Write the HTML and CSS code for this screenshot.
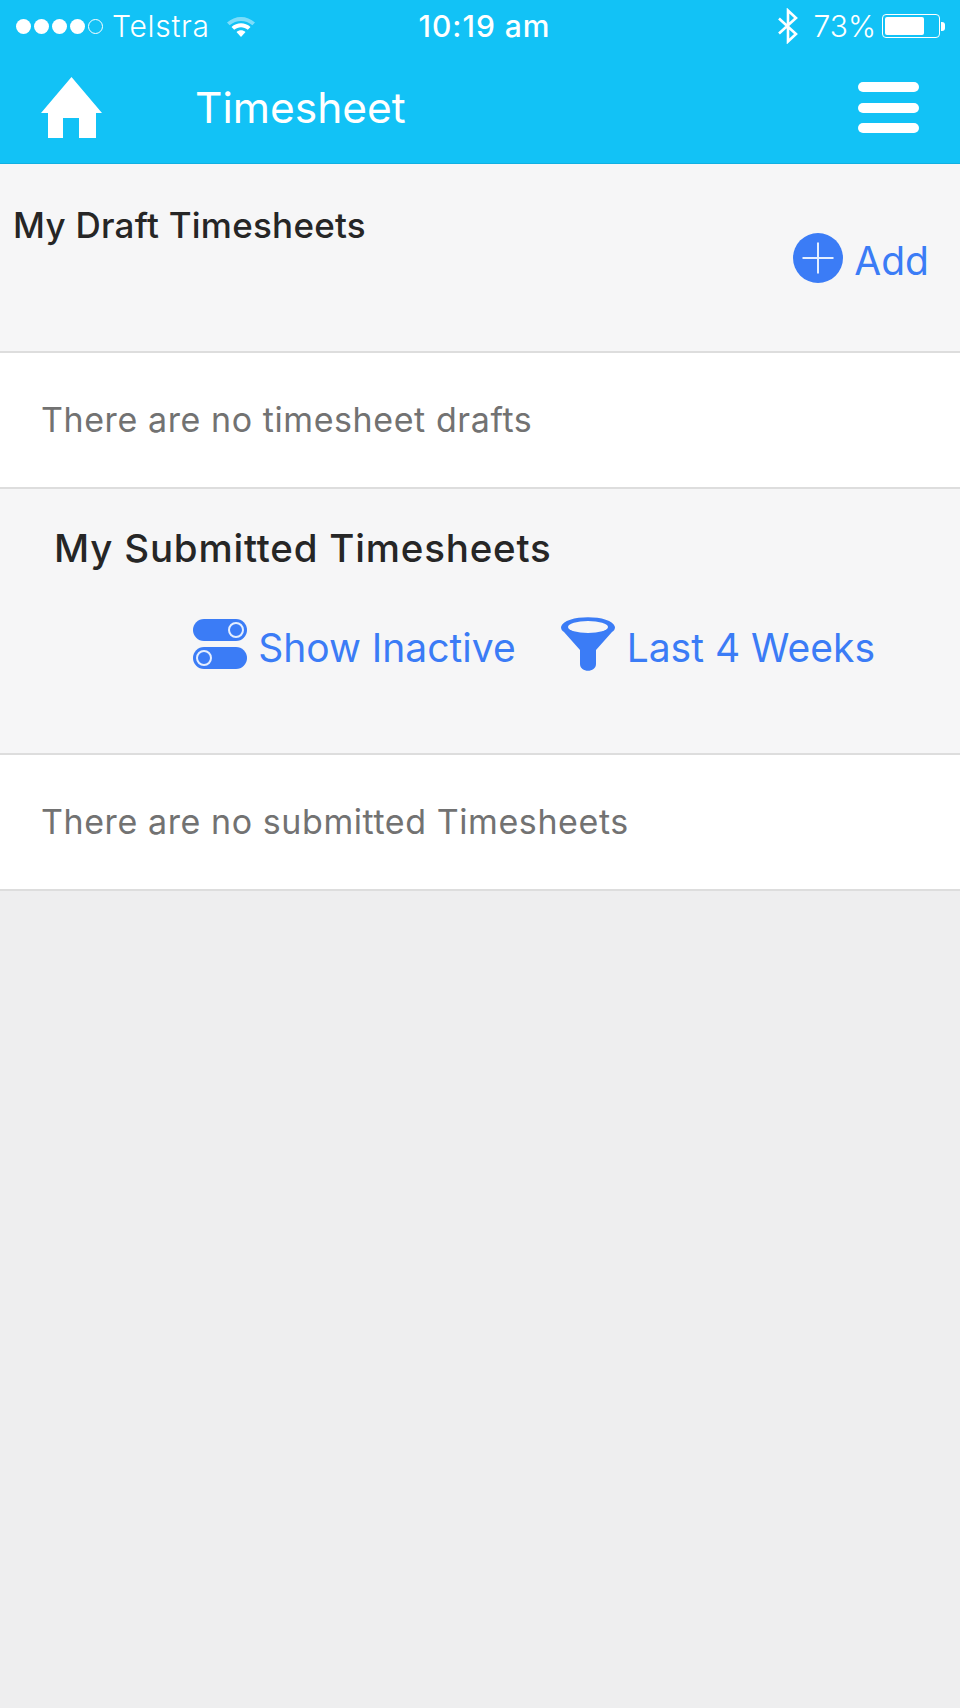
FILE: index.html
```html
<!DOCTYPE html>
<html lang="en">
  <head>
    <meta charset="UTF-8" />
    <title>Timesheet</title>
    <link rel="stylesheet" href="styles.css">
  </head>
  <body>
    <header class="top-bar">
      <div class="status-bar">
        <div class="status-left">
          <span class="signal">
            <i class="dot"></i><i class="dot"></i><i class="dot"></i><i class="dot"></i><i class="dot dot-empty"></i>
          </span>
          <span class="carrier">Telstra</span>
          <svg class="wifi" width="30" height="24" viewBox="0 0 30 24">
            <path d="M1 8.500C9 1 21 1 29 8.500l-2.600 2.800C19.800 5.500 10.200 5.500 3.600 11.300z" fill="#fff" opacity="0.45" />
            <path d="M5.500 13C11 8 19 8 24.500 13l-2.700 2.800C17.800 12.400 12.200 12.400 8.200 15.800z" fill="#fff" />
            <path d="M10.500 18c2.600-2.200 6.400-2.200 9 0L15 23z" fill="#fff" />
          </svg>
        </div>
        <div class="status-time">10:19 am</div>
        <div class="status-right">
          <svg class="bluetooth" width="24" height="36" viewBox="0 0 24 36">
            <path d="M3 10.500l17 15.500-8 7.500V2.500l8 7.500-17 15.500" fill="none" stroke="#fff" stroke-width="2.600" />
          </svg>
          <span class="battery-pct">73%</span>
          <span class="battery"><span class="battery-level"></span></span>
          <span class="battery-tip"></span>
        </div>
      </div>
      <nav class="nav-bar">
        <svg class="home" width="61" height="61" viewBox="0 0 61 61">
          <path d="M30.500 0L61 36H55V61H38V41H22V61H7V36H0z" fill="#fff" />
        </svg>
        <h1 class="nav-title">Timesheet</h1>
        <div class="menu"><span></span><span></span><span></span></div>
      </nav>
    </header>

    <section class="section-head draft-head">
      <h2 class="section-title">My Draft Timesheets</h2>
      <a class="action add-action">
        <svg width="50" height="50" viewBox="0 0 50 50">
          <circle cx="25" cy="25" r="25" fill="#3b7cf6" />
          <path d="M25 9.500V40.500M9.500 25H40.500" stroke="#e4eeff" stroke-width="2" />
        </svg>
        <span class="action-label">Add</span>
      </a>
    </section>
    <div class="empty-row">There are no timesheet drafts</div>

    <section class="section-head submitted-head">
      <h2 class="section-title submitted-title">My Submitted Timesheets</h2>
      <div class="actions">
        <a class="action">
          <svg width="54" height="50" viewBox="0 0 54 50">
            <rect width="54" height="22" rx="11" fill="#3b7cf6" />
            <rect y="28" width="54" height="22" rx="11" fill="#3b7cf6" />
            <circle cx="43" cy="11" r="7" fill="#3b7cf6" stroke="#e4eeff" stroke-width="2" />
            <circle cx="11" cy="39" r="7" fill="#3b7cf6" stroke="#e4eeff" stroke-width="2" />
          </svg>
          <span class="action-label">Show Inactive</span>
        </a>
        <a class="action filter-action">
          <svg width="54" height="54" viewBox="0 0 54 54">
            <path d="M0 10C3-3 51-3 54 10C54 12 53 14 51 15L35 33V47c0 9-16 9-16 0V33L3 15C1 14 0 12 0 10z" fill="#3b7cf6" />
            <ellipse cx="27" cy="10" rx="20" ry="6" fill="#f6f6f7" />
          </svg>
          <span class="action-label">Last 4 Weeks</span>
        </a>
      </div>
    </section>
    <div class="empty-row">There are no submitted Timesheets</div>
  </body>
</html>
```

FILE: styles.css
```css
* {
  box-sizing: border-box;
}

body {
  margin: 0;
  min-height: 1708px;
  background-color: #eeeeef;
  font-family: Inter, "Noto Sans", sans-serif;
}

.top-bar {
  height: 164px;
  background-color: #12c2f6;
  border-bottom: 1px solid #10b0e2;
  color: #fff;
}

.status-bar {
  display: grid;
  grid-template-columns: 1fr auto 1fr;
  align-items: center;
  height: 52px;
  padding: 0 15px 0 16px;
  font-size: 30px;
}

.status-left,
.status-right {
  display: flex;
  align-items: center;
}

.status-right {
  justify-content: flex-end;
}

.signal {
  display: flex;
  gap: 3px;
}

.dot {
  width: 15px;
  height: 15px;
  border-radius: 50%;
  background-color: #fff;
}

.dot-empty {
  background: none;
  border: 1px solid #fff;
}

.carrier {
  margin-left: 9px;
  font-weight: 300;
  letter-spacing: 0.7px;
}

.wifi {
  margin-left: 16px;
}

.status-time {
  margin-left: 8px;
  font-weight: 500;
  letter-spacing: 1px;
}

.bluetooth {
  margin-right: 13px;
}

.battery-pct {
  font-weight: 300;
  margin-right: 6px;
}

.battery {
  width: 58px;
  height: 24px;
  padding: 2px;
  border: 1px solid #fff;
  border-radius: 4px;
}

.battery-level {
  display: block;
  width: 39px;
  height: 100%;
  border-radius: 2px;
  background-color: #fff;
}

.battery-tip {
  width: 4px;
  height: 9px;
  margin-left: 1px;
  border-radius: 0 3px 3px 0;
  background-color: #fff;
}

.nav-bar {
  display: flex;
  align-items: center;
  height: 111px;
  padding: 0 41px;
}

.nav-title {
  margin: 0 0 0 93px;
  flex: 1;
  font-size: 42.500px;
  font-weight: 400;
}

.menu {
  display: flex;
  flex-direction: column;
  gap: 10.500px;
  width: 61px;
}

.menu span {
  height: 10px;
  border-radius: 5px;
  background-color: #fff;
}

.section-head {
  background-color: #f6f6f7;
  border-bottom: 2px solid #dddddd;
}

.draft-head {
  position: relative;
  height: 189px;
  padding: 41px 13px 0;
}

.submitted-head {
  height: 266px;
  padding: 39px 54px 0;
}

.section-title {
  margin: 0;
  font-size: 35px;
  font-weight: 460;
  line-height: 40px;
  letter-spacing: 0.250px;
  color: #262626;
}

.submitted-title {
  font-size: 38.500px;
  letter-spacing: 0.800px;
}

.action {
  display: flex;
  align-items: center;
  gap: 11px;
  font-size: 39px;
  color: #3b7cf6;
}

.filter-action {
  gap: 12px;
}

.action-label {
  margin-top: 6px;
}

.add-action {
  position: absolute;
  top: 67px;
  right: 31px;
}

.actions {
  display: flex;
  justify-content: flex-end;
  gap: 45px;
  margin-top: 49px;
  margin-right: 31px;
}

.empty-row {
  display: flex;
  align-items: center;
  height: 136px;
  padding: 0 0 2px 41px;
  background-color: #fff;
  border-bottom: 2px solid #dddddd;
  font-size: 34px;
  font-weight: 400;
  letter-spacing: 0.580px;
  color: #727272;
}
```
